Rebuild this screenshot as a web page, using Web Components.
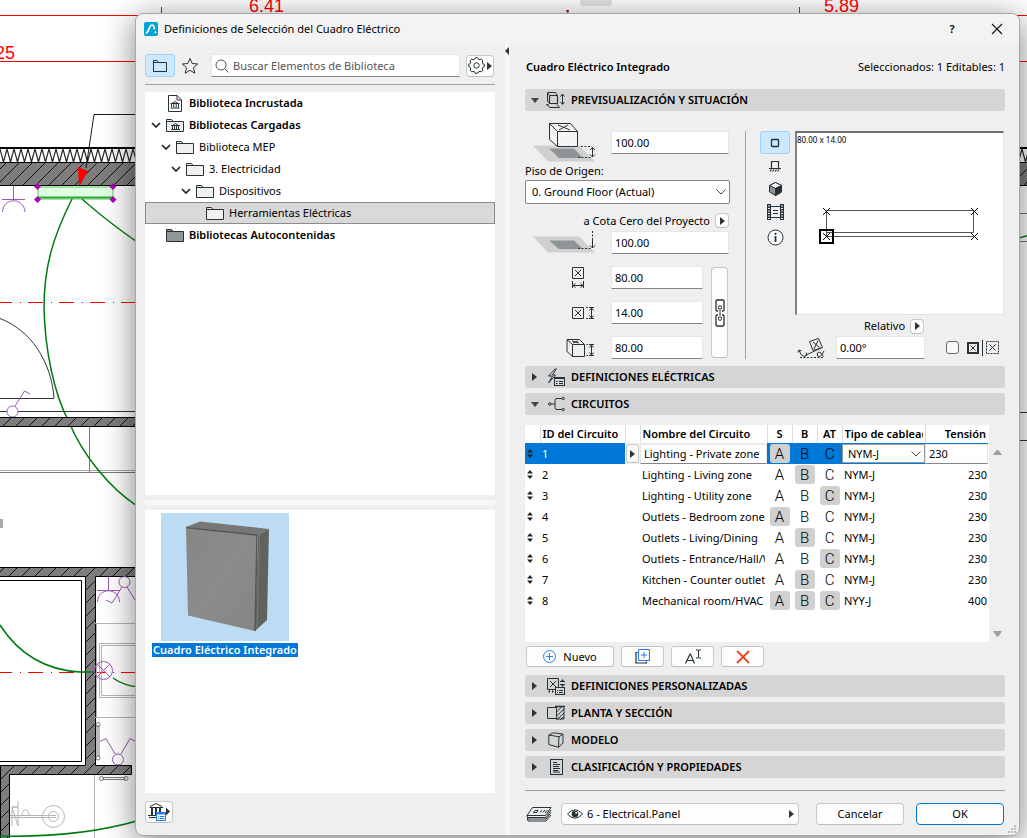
<!DOCTYPE html>
<html lang="es">
<head>
<meta charset="utf-8">
<title>Definiciones de Selección del Cuadro Eléctrico</title>
<style>
  body { margin: 0; font: 11px/16px "Noto Sans", "Open Sans", sans-serif; color: #000; background: #fff; }
</style>
</head>
<body>
<app-desktop>
  <cad-canvas slot="canvas"></cad-canvas>
  <settings-dialog heading="Definiciones de Selección del Cuadro Eléctrico">
    <library-pane slot="library"></library-pane>
    <settings-pane slot="settings"></settings-pane>
  </settings-dialog>
</app-desktop>

<script>
const BASE = `:host,*{box-sizing:border-box}
button,input,select{font:inherit;color:inherit;margin:0;outline:0}
button{padding:0;display:flex;align-items:center;justify-content:center;background:#fdfdfd;border:1px solid #c8c8c8;border-bottom-color:#bdbdbd;border-radius:4px}
input[type=text],input[type=search]{min-width:0;width:100%;height:23px;padding:0 3px;background:#fff;border:1px solid #e6e6e6;border-bottom-color:#868686;border-radius:1px}
select{appearance:none;width:100%;border-radius:0}
svg{display:block}`;

function define(name, html, setup) {
  customElements.define(name, class extends HTMLElement {
    constructor() {
      super();
      const t = document.createElement('template');
      t.innerHTML = '<style>' + BASE + '</style>' + (typeof html === 'string' ? html : '');
      this.attachShadow({ mode: 'open' }).append(t.content.cloneNode(true));
    }
    connectedCallback() { if (setup && !this.ready) { this.ready = true; setup(this, this.shadowRoot); } }
  });
}

/* name: [width, height, markup]; strokes use the ink colour unless they say otherwise */
const ICONS = {
  logo: [14, 14, '<rect width="14" height="14" rx="2" fill="#00a3d9" stroke="none"/><path d="M2 11.500C5.500 9.500 5 3 8 3C9.700 3 10.200 5 10.500 7.500M11 9.500L12 11" stroke="#fff" stroke-width="1.700"/>'],
  close: [12, 12, '<path d="M1 1L11 11M11 1L1 11" stroke="#111" stroke-width="1.100"/>'],
  folder: [18, 15, '<path d="M.5 13.500V1.500H5.500L7 3.500H17.500V13.500ZM.5 3.500H7" fill="#f0f0f0"/>'],
  folderplain: [16, 14, '<path d="M1.500 12.500V1.500H5L6.500 3.500H14.500V12.500ZM1.500 3.500H6.500"/>'],
  folderdark: [18, 15, '<path d="M.5 13.500V1.500H5.500L7 3.500H17.500V13.500ZM.5 3.500H7" fill="#90979b"/>'],
  folderlib: [18, 15, '<path d="M.5 13.500V1.500H5.500L7 3.500H17.500V13.500ZM.5 3.500H7" fill="#f0f0f0"/><path d="M5 7.500H14M6.500 7.500L9.500 5.500L12.500 7.500M6.500 7.500V11.500M8.500 7.500V11.500M10.500 7.500V11.500M12.500 7.500V11.500M5 11.500H14"/>'],
  doclib: [14, 17, '<path d="M.5 .5H9L13.500 5V16.500H.5ZM9 .5V5H13.500" fill="#fff"/><path d="M2.500 8.500H11.500M4 8.500L7 6.500L10 8.500M3.500 8.500V12.500M5.800 8.500V12.500M8.200 8.500V12.500M10.500 8.500V12.500M2.500 13H11.500"/>'],
  star: [18, 18, '<path d="M9 1.500L11.200 6.500L16.700 7L12.500 10.700L13.800 16.200L9 13.300L4.200 16.200L5.500 10.700L1.300 7L6.800 6.500Z"/>'],
  search: [14, 14, '<circle cx="6" cy="6" r="5" stroke="#555"/><path d="M9.600 9.600L13.500 13.500" stroke="#555"/>'],
  gear: [17, 17, '<path d="M7 1.800L7.300 .7H9.700L10 1.800L12 2.700L13.200 2L15 3.800L14.300 5L15.200 7L16.300 7.300V9.700L15.200 10L14.300 12L15 13.200L13.200 15L12 14.300L10 15.200L9.700 16.300H7.300L7 15.200L5 14.300L3.800 15L2 13.200L2.700 12L1.800 10L.7 9.700V7.300L1.800 7L2.700 5L2 3.800L3.800 2L5 2.700Z"/><circle cx="8.500" cy="8.500" r="2.700"/>'],
  right: [5, 8, '<path d="M0 0L5 4L0 8Z" fill="#333" stroke="none"/>'],
  left: [4, 8, '<path d="M4 0L0 4L4 8Z" fill="#333" stroke="none"/>'],
  down: [8, 5, '<path d="M0 0H8L4 5Z" fill="#444" stroke="none"/>'],
  chevron: [10, 6, '<path d="M1 1L5 5L9 1" stroke="#222" stroke-width="1.700"/>'],
  combo: [10, 6, '<path d="M.5 .5L5 5L9.500 .5" stroke="#444"/>'],
  scrollup: [9, 6, '<path d="M0 6L3.500 1H5.500L9 6Z" fill="#a0a0a0" stroke="none"/>'],
  scrolldown: [9, 6, '<path d="M0 0H9L5.500 5.500H3.500Z" fill="#a0a0a0" stroke="none"/>'],
  library: [24, 20, '<path d="M2 15.500H10M1 13.500H14M2.500 5.500H16M3 4.500L9 1.500L15 4.500M4.500 5.500V13M5.500 5.500V13M8.500 5.500V13M9.500 5.500V13M12.500 5.500V13M13.500 5.500V13"/><rect x="9.500" y="10.500" width="9" height="8" fill="#fff" stroke="#2680eb"/><path d="M9.500 11.500H18.500" stroke="#2680eb" stroke-width="2"/><path d="M11 14.500H12M13 14.500H17.500M11 16.500H12M13 16.500H17.500" stroke="#2680eb"/><path d="M19 5.500L23 9.500L19 13.500Z" fill="#333" stroke="none"/>'],
  prev: [20, 17, '<rect x="3.500" y="3.500" width="8" height="8" rx=".5" stroke-width="1.200"/><path d="M3.500 3.500L1.500 1M1.500 .5H9.500L11.500 3.500M1.500 .5V9L3.500 11.500M2.500 12.500H.5L4 15.500H13.500L11 12.500M16.500 2V12M14.500 4.500L16.500 2L18.500 4.500M14.500 10L16.500 12.500L18.500 10"/>'],
  electric: [18, 18, '<path d="M8.500 .5L1.500 8H5.500L1.500 15L8.500 7H5.500L9.500 .5"/><rect x="7.500" y="9.500" width="10" height="8" fill="#d5d5d5"/><path d="M7.500 10.500H17.500M9 13.500H10.500M12 13.500H16M9 15.500H10.500M12 15.500H16"/>'],
  circuits: [17, 16, '<circle cx="1.800" cy="8" r="1.300"/><path d="M3 8H7M14 2.500H9Q7 2.500 7 4.500V11.500Q7 13.500 9 13.500H14"/><circle cx="15.200" cy="2.500" r="1.200"/><circle cx="15.200" cy="13.500" r="1.200"/>'],
  custom: [19, 17, '<path d="M.5 .5H11.500V11.500H.5ZM3 3L9 9M9 3L3 9M13 3.500H18M13 6.500H18"/><path d="M14 3L15.500 1L17 3ZM14 7L15.500 9L17 7ZM3 12L1 13.500L3 15ZM5 12L7 13.500L5 15Z" fill="#263238" stroke="none"/><rect x="8.500" y="9.500" width="9" height="7" fill="#d5d5d5"/><path d="M10 12.500H11M12 12.500H16M10 14.500H11M12 14.500H16"/>'],
  plan: [18, 16, '<path d="M9 2.500H.5V13.500H9"/><path d="M9.500 1.500V14.500M9.500 1.500H17V14H9.500M9.500 7L15 1.500M9.500 11L17 4M10 14.500L17 8M13.500 14.500L17 11.500"/><path d="M8 1.500H18" stroke-width="1.500"/>'],
  model: [16, 16, '<path d="M.8 3L5.500 .8L15 2L11 4.800L.8 3V12.500L10.500 15.300L15 11V2M11 4.800L10.500 15.300"/>'],
  classify: [13, 16, '<rect x=".5" y=".5" width="12" height="15"/><path d="M3 3.500H7M3 5.500H10M3 7.500H9M3 9.500H10M3 11.500H8M3 13H10"/>'],
  elevbox: [64, 40, '<path d="M0 23.500H46L62 39.500H15Z" fill="#d0d0d0" stroke="none"/><path d="M16 26.500H41L50 36H26Z" fill="#8d9599" stroke="none"/><path d="M16.500 1.500H37.500L44.500 9.500V24.500H24.500L16.500 17.500Z" fill="#f4f4f4"/><path d="M16.500 1.500L24.500 9.500H44.500M24.500 9.500V24.500M25 3L37 8M35 3L26 8"/><path d="M48 24.500H59M45 35.500H59" stroke-dasharray="2 1.500"/><path d="M59.500 26V35M57 28L59.500 25.500L62 28M57 32.500L59.500 35L62 32.500"/>'],
  elevplane: [64, 24, '<path d="M0 6.500H46L62 22.500H15Z" fill="#d0d0d0" stroke="none"/><path d="M16 10.500H41L50 19H26Z" fill="#8d9599" stroke="none"/><path d="M45 18.500H58M59.500 1V10" stroke-dasharray="2 1.500"/><path d="M59.500 10V18M57 15.500L59.500 18L62 15.500"/>'],
  dimw: [22, 22, '<path d="M.5 .5H11.500V11.500H.5ZM3 3L9 9M9 3L3 9M.5 14V21M11.500 14V21M1 18.500H11M3.500 16.500L1 18.500L3.500 20.500M8.500 16.500L11 18.500L8.500 20.500"/>'],
  dimd: [22, 14, '<path d="M.5 1.500H11.500V12.500H.5ZM3 4L9 10M9 4L3 10M14 1.500H16M14 12.500H16M17 1.500H22M17 12.500H22M19.500 2V12M17.500 4.500L19.500 2L21.500 4.500M17.500 9.500L19.500 12L21.500 9.500"/>'],
  dimh: [28, 19, '<path d="M1 1.500H13.500L18.500 6.500V18.500H6.500L1 13.500ZM1 1.500L6.500 6.500H18.500M6.500 6.500V18.500M6 3L13 5M12 3L7 5M20.500 6.500H22M20.500 17.500H22M23 6.500H28M23 17.500H28M25.500 7V17M23.500 9.500L25.500 7L27.500 9.500M23.500 14.500L25.500 17L27.500 14.500"/>'],
  chain: [10, 28, '<path d="M3 12H2Q1 12 1 11V2Q1 1 2 1H8Q9 1 9 2V11Q9 12 8 12H7M3 16H2Q1 16 1 17V26Q1 27 2 27H8Q9 27 9 26V17Q9 16 8 16H7" stroke-width="1.300"/><path d="M3.500 10V8.500Q3.500 6.500 5 6.500Q6.500 6.500 6.500 8.500V10M3.500 18V19.500Q3.500 21.500 5 21.500Q6.500 21.500 6.500 19.500V18M5 9V19"/>'],
  v2d: [10, 10, '<rect x="1.500" y="1.500" width="7" height="7" rx=".5" stroke-width="1.300"/>'],
  vfront: [12, 12, '<path d="M2.500 8V1.500H9.500V8M0 8.500H12M1 11.500L2.500 9.500M3.500 11.500L5 9.500M6 11.500L7.500 9.500M8.500 11.500L10 9.500" stroke-width="1.200"/>'],
  v3d: [13, 14, '<path d="M6.500 .5L12.500 3.500V10L6.500 13.500L.5 10V3.500Z" fill="#8d9599"/><path d="M6.500 .5L12.500 3.500L6.500 6.500L.5 3.500Z" fill="#f5f5f5"/><path d="M12.500 3.500V10L6.500 13.500V6.500Z" fill="#263238"/>'],
  vfilm: [17, 16, '<path d="M2 0V16M15 0V16" stroke-width="3" stroke-dasharray="1.500 1"/><path d="M.5 0V16M3.500 0V16M13.500 0V16M16.500 0V16M3.500 2.500H13.500M3.500 13.500H13.500M6 6.500H11M6 9.500H11"/>'],
  vinfo: [17, 17, '<circle cx="8.500" cy="8.500" r="7.500" fill="#fafafa"/><path d="M8.500 7V13" stroke-width="1.800"/><circle cx="8.500" cy="4.800" r="1.100" fill="#263238" stroke="none"/>'],
  angle: [28, 22, '<path d="M12.500 4.500L21.500 1.500L25.500 10.500L16 13.500ZM16 5L22.500 10.500M21 3.500L17 12M8 18.500L24 11"/><path d="M3 20.500H27" stroke-dasharray="2 1.500"/><path d="M2 13Q3 18 7 19.500M.5 15.500L2 13L4.500 14M9 15.500L10 18L7 19.500M27 14Q23 22 20.500 19Q19.500 15 22 15Q24 15 26.500 19.500"/>'],
  anchorin: [12, 12, '<rect x="1" y="1" width="10" height="10" stroke-width="2"/><path d="M3.500 3.500L8.500 8.500M8.500 3.500L3.500 8.500"/>'],
  anchorout: [13, 13, '<rect x=".5" y=".5" width="12" height="12" stroke-dasharray="2 1"/><path d="M3.500 3.500L9.500 9.500M9.500 3.500L3.500 9.500"/>'],
  sort: [6, 9, '<path d="M0 3.500L3 0L6 3.500ZM0 5.500L3 9L6 5.500Z" fill="#222" stroke="none"/>'],
  plus: [13, 13, '<circle cx="6.500" cy="6.500" r="6" stroke="#2680eb"/><path d="M6.500 3V10M3 6.500H10" stroke="#2680eb"/>'],
  duplicate: [15, 15, '<path d="M2.500 3.500H1V14H11.500V12.500" stroke-width="1.200"/><rect x="3.500" y=".5" width="11" height="11" rx="1" stroke="#2680eb" stroke-width="1.200"/><path d="M9 3V9M6 6H12" stroke="#2680eb"/>'],
  rename: [18, 15, '<path d="M1.500 14.500L6 5H6.500L10.500 14.500M3 11.500H9.500" stroke-width="1.200"/><path d="M14.500 1.500V8.500M12 .8Q14.500 .8 14.500 2Q14.500 .8 17 .8M12 9.200Q14.500 9.200 14.500 8Q14.500 9.200 17 9.200"/>'],
  remove: [14, 14, '<path d="M1 1L13 13M13 1L1 13" stroke="#f4461e" stroke-width="1.800"/>'],
  layers: [26, 16, '<path d="M6.500 1.500H25L19.500 9.500H1Z"/><path d="M1 9.500L1.500 11.500H20L25 4M1.500 11.500V13H20L25 6.500M1.500 13L2 15H20L25 9M9 4.500H12L11 6.500H7.500ZM14 6.500L16 4M17 6.500L19 4M19 7L21.500 4"/>'],
  eye: [16, 10, '<path d="M.5 5Q8 -3.500 15.500 5Q8 13.500 .5 5Z"/><circle cx="8" cy="5" r="3.300" fill="#263238" stroke="none"/><circle cx="9.200" cy="3.800" r="1" fill="#fff" stroke="none"/>']
};

define('ui-icon', '<style>:host{display:block;flex:none}</style>', (el, root) => {
  const [w, h, body] = ICONS[el.getAttribute('name')];
  root.innerHTML += `<svg width="${w}" height="${h}" viewBox="0 0 ${w} ${h}" fill="none" stroke="#263238" aria-hidden="true">${body}</svg>`;
});

define('app-desktop', `<style>
:host{display:block;position:relative;min-height:100vh;overflow:hidden}
::slotted(cad-canvas){position:absolute;inset:0}
</style><slot name="canvas"></slot><slot></slot>`);

define('cad-canvas', `<style>
:host{display:block}
svg{width:100%;height:100%}
text{font:18px "Liberation Sans",sans-serif;fill:#f00}
.k{stroke:#000}.g{stroke:#007a10;stroke-width:1.500}.p{stroke:#9b59b6}.s{stroke:#b4b4b4}.r{stroke:#f00}
.d{stroke-dasharray:15 8 1 7}
</style>
<svg fill="none" aria-hidden="true">
<defs>
<pattern id="wall" width="13" height="13" patternUnits="userSpaceOnUse"><rect width="13" height="13" fill="#7d7d7d"/><path d="M-2 15L15 -2M-2 2L2 -2M11 15L15 11" stroke="#111"/></pattern>
<pattern id="ins" width="7" height="14" y="149" patternUnits="userSpaceOnUse"><path d="M0 0L3.500 13L7 0" stroke="#222" stroke-width="1.200"/></pattern>
</defs>
<path class="r" d="M0 15.500H1100M0 61.500H1100M161.500 7V13M799.500 7V13"/>
<path d="M566 10L569 10L568 14Z" fill="#a00"/>
<rect x="580" y="-4" width="32" height="10" rx="3" fill="#e2e2e2"/>
<text x="249" y="12">6.41</text><text x="824" y="12">5.89</text><text x="-5" y="59">25</text>
<rect y="149" width="1100" height="14" fill="url(#ins)"/>
<rect y="163" width="1100" height="22" fill="url(#wall)"/>
<path class="k" d="M0 162.500H1100M0 185.500H1100"/><path class="k" stroke-width="2" d="M0 148H1100"/>
<path class="k" stroke-width=".9" d="M140 114.500H94L86 168"/><path d="M78 167L88 171L79 187Z" fill="#f00"/>
<path class="p" d="M13.500 186V199M2 199.500H25M2.500 212C3 197 24 197 25 212"/>
<rect x="38" y="187" width="75" height="12" fill="#e1fde1" stroke="#5cc95c"/><path d="M38 197.500H113" stroke="#2fa83a" stroke-width="2"/>
<path d="M37.500 183L41 186.500L37.500 190L34 186.500ZM113 183L116.500 186.500L113 190L109.500 186.500ZM37.500 196L41 199.500L37.500 203L34 199.500ZM113 196L116.500 199.500L113 203L109.500 199.500Z" fill="#b000b8"/>
<path class="k" stroke-width=".8" d="M0 318.500C30 330 51 360 54 398M0 398.500H54M0 411.500H140M1015 412.500H1040M1015 440.500H1040"/>
<path d="M1015 213.500H1040M1015 241.500H1040M0 472.500H140M89.500 427V472" stroke="#777"/><path d="M0 470.500H140" stroke="#aaa"/>
<path class="r d" stroke-dashoffset="3" d="M0 302.500H1000M0 672.500H1000"/>
<path class="g" d="M72 199C54 235 44 265 44 308C45 350 54 394 69 422C83 456 110 488 137 506M82 199Q108 222 140 244M1015 239L1030 235"/>
<circle class="p" cx="12.500" cy="411.500" r="5.500" fill="#fff"/><path class="p" d="M15 406L24.500 391L30 394"/>
<g class="k"><path fill="url(#wall)" d="M-2 417.500H140V426.500H-2ZM-2 567.500H140V576.500H95.500V765.500H131.500V774.500H9.500V840H.5V765.500H85.500V576.500H-2Z"/><path d="M-1 580.500H81.500V761.500H-1"/></g>
<rect y="519" width="3" height="9" fill="#aaa"/>
<path class="s" d="M95 623.500H140M96.500 623V717M95 717.500H140M140 643.500H99.500V697.500H140M140 645.500H101.500V695.500H140M94.500 775V840"/>
<g class="p"><path d="M108.500 577V590M97 590.500H120M97.500 602C98 587 119 587 119.500 602M122 587L112 603L106 600M127 587L135 600"/><circle cx="124.500" cy="582" r="5.500"/><circle cx="103.500" cy="670.500" r="9"/><path d="M97 664L110 677M110 664L97 677M115 754L106 738.500L100 741.500M121 754L130 738.500L136 741.500"/><circle cx="118" cy="759.500" r="5.500"/></g>
<path class="g" d="M0 625C18 653 45 670 80 672H94M113 678Q124 686 140 687M0 836C50 837 100 832 140 820"/>
<g stroke="#777"><path d="M97 726V756H99V726ZM103 777.500H125V779.500H103Z"/><circle cx="98" cy="724.500" r="2"/><circle cx="98" cy="758" r="2"/><circle cx="101.500" cy="778.500" r="2"/><circle cx="126" cy="778.500" r="2"/></g>
<g class="s"><circle cx="53.500" cy="816.500" r="11"/><circle cx="53.500" cy="816.500" r="5"/><path d="M10 815.500H56M10 817.500H56M12 826V807H18V801M12 807H18V826ZM22 815C22 808 29 808 29 815"/></g>
</svg>`);

define('settings-dialog', `<style>
:host{display:flex;flex-direction:column;position:relative;margin:13px 7px 0 135px;min-height:calc(100vh - 15px);background:#efefef;border:1px solid #a8a8a8;border-radius:8px;box-shadow:0 6px 32px rgba(0,0,0,.5)}
header{display:flex;align-items:center;gap:6px;height:30px;padding:0 12px 0 8px;background:#f3f3f3;border-radius:8px 8px 0 0}
h1{flex:1;margin:0;font-size:11px;font-weight:400}
header button{background:none;border:0;width:20px;height:20px;font-weight:600}
header div{display:flex;gap:25px}
main{flex:1;display:grid;grid-template-columns:minmax(0,369fr) 5px minmax(0,509fr)}
aside{background:#f7f7f7}
aside ui-icon{margin:3px 0 0}
.grip{position:absolute;right:3px;bottom:2px}
</style>
<header><ui-icon name="logo"></ui-icon><h1></h1><div><button aria-label="Ayuda">?</button><button aria-label="Cerrar"><ui-icon name="close"></ui-icon></button></div></header>
<main><slot name="library"></slot><aside><ui-icon name="left"></ui-icon></aside><slot name="settings"></slot></main>
<svg class="grip" width="8" height="8" fill="#bbb"><path d="M6 0h2v2h-2zM3 3h2v2h-2zM6 3h2v2h-2zM0 6h2v2h-2zM3 6h2v2h-2zM6 6h2v2h-2z"/></svg>`,
(el, root) => { root.querySelector('h1').textContent = el.getAttribute('heading'); });

define('tree-row', `<style>
:host{display:flex;align-items:center;height:22px;border:1px solid transparent}
:host([selected]){background:#d9d9d9;border-color:#8c8c8c}
:host([strong]){font-weight:600}
.t{width:20px;flex:none;display:flex;justify-content:center}
.i{width:18px;margin-right:5px;display:flex;justify-content:center}
</style><span class="t"></span><span class="i"></span><slot></slot>`, (el, root) => {
  el.style.paddingLeft = el.getAttribute('level') * 10 + 'px';
  if (el.hasAttribute('open')) root.querySelector('.t').innerHTML = '<ui-icon name="chevron"></ui-icon>';
  root.querySelector('.i').innerHTML = `<ui-icon name="${el.getAttribute('icon')}"></ui-icon>`;
});

define('library-pane', `<style>
:host{display:flex;flex-direction:column;padding:10px 10px 12px 9px}
.bar{display:flex;align-items:center;gap:6px;height:23px;margin-bottom:7px}
.on{width:30px;height:23px;background:#cce8ff;border-color:#99d1ff;border-radius:3px}
.star{width:18px;height:18px;background:none;border:0}
label{flex:1;display:flex;align-items:center;gap:4px;height:23px;margin-left:6px;padding-left:3px;background:#fff;border:1px solid #e6e6e6;border-bottom-color:#868686}
label input[type=search]{border:0;height:20px;padding:0}
::placeholder{color:#555;opacity:1}
.gear{width:28px;height:22px;gap:2px;margin-right:1px}
hr{width:100%;height:1px;margin:0 0 7px;border:0;background:#a0a0a0}
.tree{flex:403;background:#fff}
.split{height:5px;margin:5px 0;background:#f7f7f7}
.items{flex:277;background:#fff;padding:3px 7px}
figure{margin:0;width:146px}
figure svg{margin:0 auto;background:#bcdcf4}
figcaption{margin-top:2px;line-height:14px;text-align:center;white-space:nowrap;background:#0078d7;color:#fff;font-weight:600}
.lib{width:28px;height:22px;margin-top:8px}
</style>
<div class="bar"><button class="on" aria-label="Carpetas"><ui-icon name="folderplain"></ui-icon></button><button class="star" aria-label="Favoritos"><ui-icon name="star"></ui-icon></button>
<label><ui-icon name="search"></ui-icon><input type="search" aria-label="Buscar" placeholder="Buscar Elementos de Biblioteca"></label>
<button class="gear" aria-label="Opciones"><ui-icon name="gear"></ui-icon><ui-icon name="right"></ui-icon></button></div>
<hr>
<nav class="tree">
<tree-row level="0" icon="doclib" strong>Biblioteca Incrustada</tree-row>
<tree-row level="0" icon="folderlib" strong open>Bibliotecas Cargadas</tree-row>
<tree-row level="1" icon="folder" open>Biblioteca MEP</tree-row>
<tree-row level="2" icon="folder" open>3. Electricidad</tree-row>
<tree-row level="3" icon="folder" open>Dispositivos</tree-row>
<tree-row level="4" icon="folder" selected>Herramientas Eléctricas</tree-row>
<tree-row level="0" icon="folderdark" strong>Bibliotecas Autocontenidas</tree-row>
</nav>
<div class="split"></div>
<div class="items"><figure>
<svg width="128" height="128" viewBox="0 0 128 128">
<defs><linearGradient id="f" x2="1" y2="1"><stop stop-color="#868684"/><stop offset=".5" stop-color="#8b8b8a"/><stop offset="1" stop-color="#858583"/></linearGradient></defs>
<path d="M25 14L39 8.500L108 16L97 22Z" fill="#777875"/><path d="M97 22L108 16L106 107L94 118Z" fill="#60625e"/>
<path d="M25 14.500L96 22L94 118L27 102.500Z" fill="url(#f)"/><path d="M25 14.500L96 22L94 118" fill="none" stroke="#555753" stroke-width="1.500"/><path d="M98.500 21L96 116" fill="none" stroke="#777975" stroke-width="1"/></svg>
<figcaption>Cuadro Eléctrico Integrado</figcaption></figure></div>
<button class="lib" aria-label="Gestor de bibliotecas"><ui-icon name="library"></ui-icon></button>`);

define('panel-section', `<style>
:host{display:block;margin-bottom:5px}
:host([open]){margin-bottom:0}
h2{margin:0;font-size:11px;font-weight:600}
h2 button{width:100%;height:22px;justify-content:flex-start;background:#d5d5d5;border:0;border-radius:3px;white-space:nowrap}
.a{width:19px;display:flex;justify-content:center}
.i{width:22px;margin:0 4px 0 1px;display:flex;justify-content:center}
</style><h2><button><span class="a"></span><span class="i"></span><span class="n"></span></button></h2><slot></slot>`, (el, root) => {
  const open = el.hasAttribute('open');
  root.querySelector('button').setAttribute('aria-expanded', open);
  root.querySelector('.a').innerHTML = `<ui-icon name="${open ? 'down' : 'right'}"></ui-icon>`;
  root.querySelector('.i').innerHTML = `<ui-icon name="${el.getAttribute('icon')}"></ui-icon>`;
  root.querySelector('.n').textContent = el.getAttribute('heading');
});

define('position-panel', `<style>
:host{display:grid;grid-template-columns:205px 30px minmax(0,1fr);padding:11px 1px 7px 0}
.row{display:grid;grid-template-columns:86px minmax(0,1fr);align-items:center;padding-right:1px}
.row ui-icon{margin-left:8px}
.home{display:block;height:18px;line-height:18px}
.combo{display:grid;align-items:center;margin-bottom:6px}
.combo>*{grid-area:1/1}
.combo select{height:24px;padding:0 6px;background:#fff;border:1px solid #868686;border-radius:2px}
.combo ui-icon{justify-self:end;margin-right:4px;pointer-events:none}
.rel{display:flex;align-items:center;justify-content:flex-end;gap:5px;height:20px;padding:1px 1px 0 0}
.pop{width:14px;height:15px}
.dims{display:grid;grid-template-columns:86px minmax(0,1fr) 17px;row-gap:12px;align-items:center;margin-top:12px;padding-right:2px}
.dims input{width:92px}
.dims>ui-icon{justify-self:end;margin-right:17px}
.dims button{grid-area:1/3/4/4;align-self:stretch;margin:1px 0}
.rule{justify-self:end;width:1px;background:#a0a0a0;margin:9px 14px 0 0}
.view{display:grid;grid-template-columns:30px minmax(0,1fr);column-gap:5px;grid-template-rows:184px 21px 23px;padding-top:9px}
.modes{display:flex;flex-direction:column}
.modes button{height:23px;background:none;border:0}
.modes .on{background:#cce8ff;border:1px solid #99d1ff;border-radius:3px}
.modes button:last-child{height:28px}
.box{position:relative;background:#fff;border:2px solid #808080;border-width:2px 1px 1px 2px;border-color:#707070 #e3e3e3 #e3e3e3 #808080}
.box svg{position:absolute;inset:0;width:100%;height:100%}
.box text{font:8px "Noto Sans",sans-serif}
.rel2{grid-column:2;justify-content:flex-start;padding-left:69px;height:21px}
.ang{grid-column:1/3;display:grid;grid-template-columns:76px 89px 1fr;align-items:center}
.ang>ui-icon{justify-self:end;margin-right:11px}
.anchor{display:flex;align-items:center;justify-content:flex-end;gap:3px;padding-right:5px}
.anchor input{appearance:none;width:13px;height:13px;margin-right:5px;border:1px solid #6a6a6a;border-radius:3px;background:#f8f8f8}
.anchor i{width:1px;height:16px;background:#263238}
</style>
<div class="left">
<div class="row"><ui-icon name="elevbox"></ui-icon><input type="text" aria-label="Elevación" value="100.00"></div>
<label class="home" for="story">Piso de Origen:</label>
<div class="combo"><select id="story"><option>0. Ground Floor (Actual)</option></select><ui-icon name="combo"></ui-icon></div>
<div class="rel"><span>a Cota Cero del Proyecto</span><button class="pop" aria-label="Referencia"><ui-icon name="right"></ui-icon></button></div>
<div class="row"><ui-icon name="elevplane"></ui-icon><input type="text" aria-label="Cota" value="100.00"></div>
<div class="dims"><ui-icon name="dimw"></ui-icon><input type="text" aria-label="Ancho" value="80.00"><button aria-label="Vincular"><ui-icon name="chain"></ui-icon></button>
<ui-icon name="dimd"></ui-icon><input type="text" aria-label="Fondo" value="14.00"><ui-icon name="dimh"></ui-icon><input type="text" aria-label="Alto" value="80.00"></div>
</div>
<div class="rule"></div>
<div class="view">
<div class="modes"><button class="on" aria-label="Planta"><ui-icon name="v2d"></ui-icon></button><button aria-label="Alzado"><ui-icon name="vfront"></ui-icon></button><button aria-label="3D"><ui-icon name="v3d"></ui-icon></button><button aria-label="Imagen"><ui-icon name="vfilm"></ui-icon></button><button aria-label="Información"><ui-icon name="vinfo"></ui-icon></button></div>
<div class="box"><svg fill="none"><text x="0" y="10" fill="#000">80.00 x 14.00</text>
<path d="M29.500 77.500H176.500V99.500H29.500ZM29.500 103.500H176.500M29.500 99V104" stroke="#555"/>
<path d="M26 75L33 82M33 75L26 82M174 75L181 82M181 75L174 82M26 100L33 107M33 100L26 107M174 100L181 107M181 100L174 107" stroke="#000"/>
<rect x="23" y="97" width="13" height="13" stroke="#000" stroke-width="2"/></svg></div>
<div class="rel rel2"><span>Relativo</span><button class="pop" aria-label="Relativo"><ui-icon name="right"></ui-icon></button></div>
<div class="ang"><ui-icon name="angle"></ui-icon><input type="text" aria-label="Ángulo" value="0.00°"><div class="anchor"><input type="checkbox" aria-label="Simetría"><ui-icon name="anchorin"></ui-icon><i></i><ui-icon name="anchorout"></ui-icon></div></div>
</div>`);

const CIRCUITS = [
  ['Lighting - Private zone', 'A', 'NYM-J', 230], ['Lighting - Living zone', 'B', 'NYM-J', 230],
  ['Lighting - Utility zone', 'C', 'NYM-J', 230], ['Outlets - Bedroom zone', 'A', 'NYM-J', 230],
  ['Outlets - Living/Dining', 'B', 'NYM-J', 230], ['Outlets - Entrance/Hall/W', 'C', 'NYM-J', 230],
  ['Kitchen - Counter outlets', 'B', 'NYM-J', 230], ['Mechanical room/HVAC', 'ABC', 'NYY-J', 400]];

define('circuits-panel', `<style>
:host{display:block;padding:10px 0 8px}
.list{display:flex;height:217px;margin-bottom:4px}
.sheet{flex:1;min-width:0;background:#fff;padding-right:1px}
table{width:100%;table-layout:fixed;border-collapse:collapse}
th,td{padding:0 2px;text-align:left;white-space:nowrap;overflow:hidden;height:21px}
th{height:18px;font-weight:600;border-right:1px solid #dcdcdc}
th.c{text-align:center;padding:0}th.n{text-align:right;padding-right:2px;border-right:0}
td.n{text-align:right;padding-right:1px}
td.c{padding:0}
.clip{overflow:hidden}
td.c button{width:20px;height:19px;margin:0 auto;padding:0;border:0;border-radius:3px;background:none;font:300 15px/18px Roboto,sans-serif;color:#000}
td.c button[aria-pressed=true]{background:#d0d0d0}
.cur td{background:#0078d7}
.cur .id{color:#fff}
.cur .pop,.cur .nm{background:#efefef;padding:0}
.cur .pop button{width:13px;height:19px;margin:0 auto}
.cur .n,.cur .ty{padding:0}
.cur input[type=text]{display:block;height:20px}
.combo{display:grid;align-items:center}
.combo>*{grid-area:1/1}
.combo select{height:19px;padding:0 5px;border:1px solid #999;background:#fff}
.combo ui-icon{justify-self:end;margin-right:4px;pointer-events:none}
.scroll{display:flex;flex-direction:column;justify-content:space-between;align-items:center;width:16px;padding:24px 0 5px}
.bar{display:flex;gap:7px;padding-left:1px}
.bar button{width:43px;height:21px;gap:7px;border-radius:3px}
.bar .new{width:88px}
</style>
<div class="list"><div class="sheet"><table><colgroup><col style="width:15px"><col style="width:85px"><col style="width:15px"><col><col style="width:25px"><col style="width:25px"><col style="width:25px"><col style="width:83px"><col style="width:63px"></colgroup>
<thead><tr><th></th><th>ID del Circuito</th><th></th><th>Nombre del Circuito</th><th class="c">S</th><th class="c">B</th><th class="c">AT</th><th><div class="clip">Tipo de cableado</div></th><th class="n">Tensión</th></tr></thead><tbody></tbody></table></div>
<div class="scroll"><ui-icon name="scrollup"></ui-icon><ui-icon name="scrolldown"></ui-icon></div></div>
<div class="bar"><button class="new"><ui-icon name="plus"></ui-icon>Nuevo</button><button aria-label="Duplicar"><ui-icon name="duplicate"></ui-icon></button><button aria-label="Renombrar"><ui-icon name="rename"></ui-icon></button><button aria-label="Borrar"><ui-icon name="remove"></ui-icon></button></div>`,
(el, root) => {
  root.querySelector('tbody').innerHTML = CIRCUITS.map(([name, on, type, volt], i) => {
    const phases = [...'ABC'].map(p => `<td class="c"><button aria-pressed="${on.includes(p)}">${p}</button></td>`).join('');
    const cur = i === 0;
    return `<tr${cur ? ' class="cur"' : ''}><td><ui-icon name="sort"></ui-icon></td><td class="id">${i + 1}</td>
      <td class="pop">${cur ? '<button aria-label="Elegir"><ui-icon name="right"></ui-icon></button>' : ''}</td>
      <td class="nm">${cur ? `<input type="text" aria-label="Nombre" value="${name}">` : `<div class="clip">${name}</div>`}</td>${phases}
      <td class="ty">${cur ? `<div class="combo"><select aria-label="Tipo"><option>${type}</option></select><ui-icon name="combo"></ui-icon></div>` : type}</td>
      <td class="n">${cur ? `<input type="text" aria-label="Tensión" value="${volt}">` : volt}</td></tr>`;
  }).join('');
});

define('settings-pane', `<style>
:host{display:flex;flex-direction:column;padding:14px 14px 10px 15px}
.top{display:flex;justify-content:space-between;height:18px;line-height:18px;margin:0 0 13px;padding-left:1px}
.top b{font-weight:600}
.grow{flex:1}
hr{width:100%;height:1px;margin:7px 0 12px;border:0;background:#a0a0a0}
footer{display:flex;align-items:center;padding:0 1px}
.layer{flex:1;height:22px;margin:0 17px 0 9px;padding:0 4px 0 5px;gap:4px;justify-content:flex-start}
.layer span{flex:1;text-align:left}
.act{width:88px;height:22px}
.ok{margin-left:12px;border:1px solid #0078d7}
</style>
<div class="top"><b>Cuadro Eléctrico Integrado</b><span>Seleccionados: 1 Editables: 1</span></div>
<panel-section open icon="prev" heading="PREVISUALIZACIÓN Y SITUACIÓN"><position-panel></position-panel></panel-section>
<panel-section icon="electric" heading="DEFINICIONES ELÉCTRICAS"></panel-section>
<panel-section open icon="circuits" heading="CIRCUITOS"><circuits-panel></circuits-panel></panel-section>
<panel-section icon="custom" heading="DEFINICIONES PERSONALIZADAS"></panel-section>
<panel-section icon="plan" heading="PLANTA Y SECCIÓN"></panel-section>
<panel-section icon="model" heading="MODELO"></panel-section>
<panel-section icon="classify" heading="CLASIFICACIÓN Y PROPIEDADES"></panel-section>
<div class="grow"></div><hr>
<footer><ui-icon name="layers"></ui-icon><button class="layer"><ui-icon name="eye"></ui-icon><span>6 - Electrical.Panel</span><ui-icon name="right"></ui-icon></button><button class="act">Cancelar</button><button class="act ok">OK</button></footer>`);
</script>
</body>
</html>
